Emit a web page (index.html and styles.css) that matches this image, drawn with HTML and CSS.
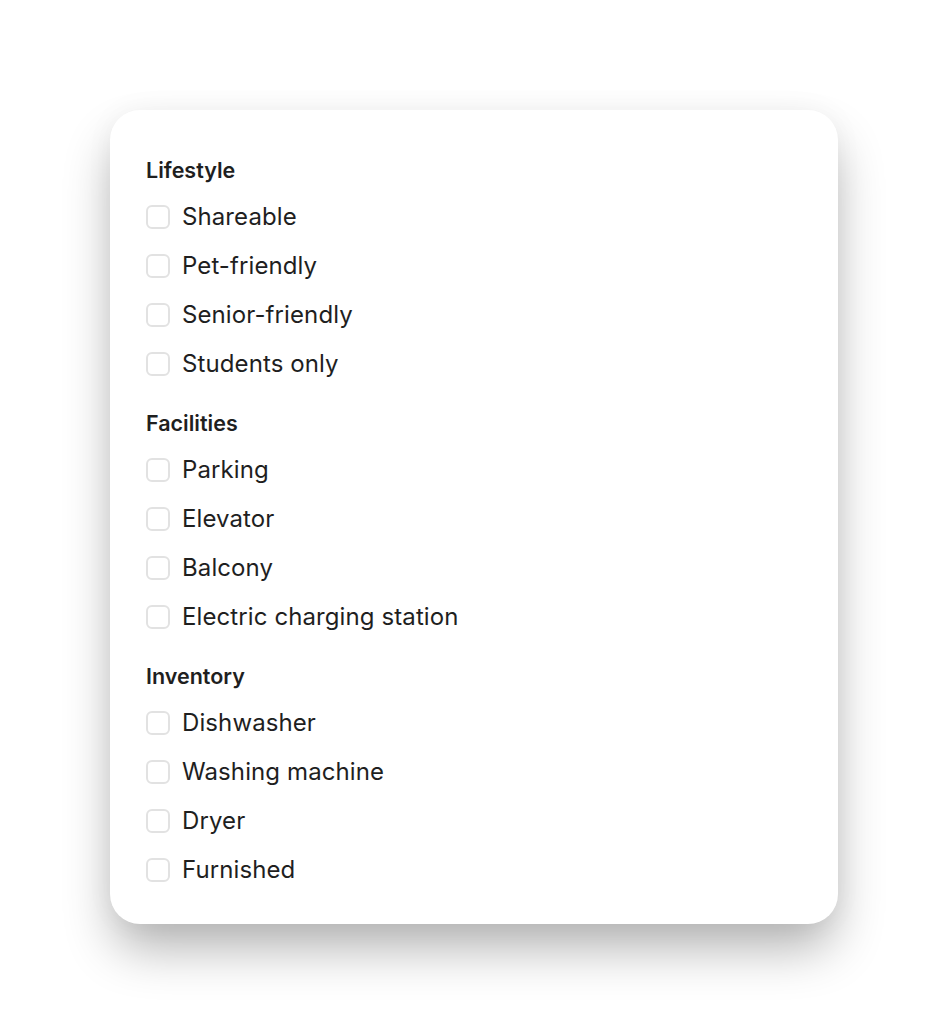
FILE: index.html
```html
<!DOCTYPE html>
<html lang="en">
<head>
<meta charset="utf-8">
<link rel="stylesheet" href="styles.css">
</head>
<body>
<div class="card">
  <section class="group">
    <h3 class="title">Lifestyle</h3>
    <label class="item"><span class="box"></span><span>Shareable</span></label>
    <label class="item"><span class="box"></span><span>Pet-friendly</span></label>
    <label class="item"><span class="box"></span><span>Senior-friendly</span></label>
    <label class="item"><span class="box"></span><span>Students only</span></label>
  </section>
  <section class="group">
    <h3 class="title">Facilities</h3>
    <label class="item"><span class="box"></span><span>Parking</span></label>
    <label class="item"><span class="box"></span><span>Elevator</span></label>
    <label class="item"><span class="box"></span><span>Balcony</span></label>
    <label class="item"><span class="box"></span><span>Electric charging station</span></label>
  </section>
  <section class="group">
    <h3 class="title">Inventory</h3>
    <label class="item"><span class="box"></span><span>Dishwasher</span></label>
    <label class="item"><span class="box"></span><span>Washing machine</span></label>
    <label class="item"><span class="box"></span><span>Dryer</span></label>
    <label class="item"><span class="box"></span><span>Furnished</span></label>
  </section>
</div>
</body>
</html>
```
FILE: styles.css
```css
html, body {
  margin: 0;
  padding: 0;
  background: #ffffff;
}
body {
  font-family: Inter, "Noto Sans", sans-serif;
  color: #1f1f1f;
  padding: 110px 110px 0 110px;
  min-height: 100vh;
  box-sizing: border-box;
}
.card {
  width: 728px;
  box-sizing: border-box;
  background: #fff;
  border-radius: 30px;
  padding: 48px 36px 40px 36px;
  box-shadow: 0 28px 50px -4px rgba(0, 0, 0, 0.3), 0 0 30px rgba(0, 0, 0, 0.04);
  display: flex;
  flex-direction: column;
  gap: 33px;
}
.group {
  display: flex;
  flex-direction: column;
  gap: 20px;
}
.title {
  margin: 0;
  font-size: 21.5px;
  line-height: 24px;
  font-weight: 600;
}
.item {
  display: flex;
  align-items: center;
  gap: 12px;
  height: 29px;
  font-size: 24px;
  line-height: 29px;
  letter-spacing: 0.1px;
}
.box {
  width: 24px;
  height: 24px;
  box-sizing: border-box;
  border: 2px solid #e2e2e2;
  border-radius: 6px;
  flex: none;
}
```
